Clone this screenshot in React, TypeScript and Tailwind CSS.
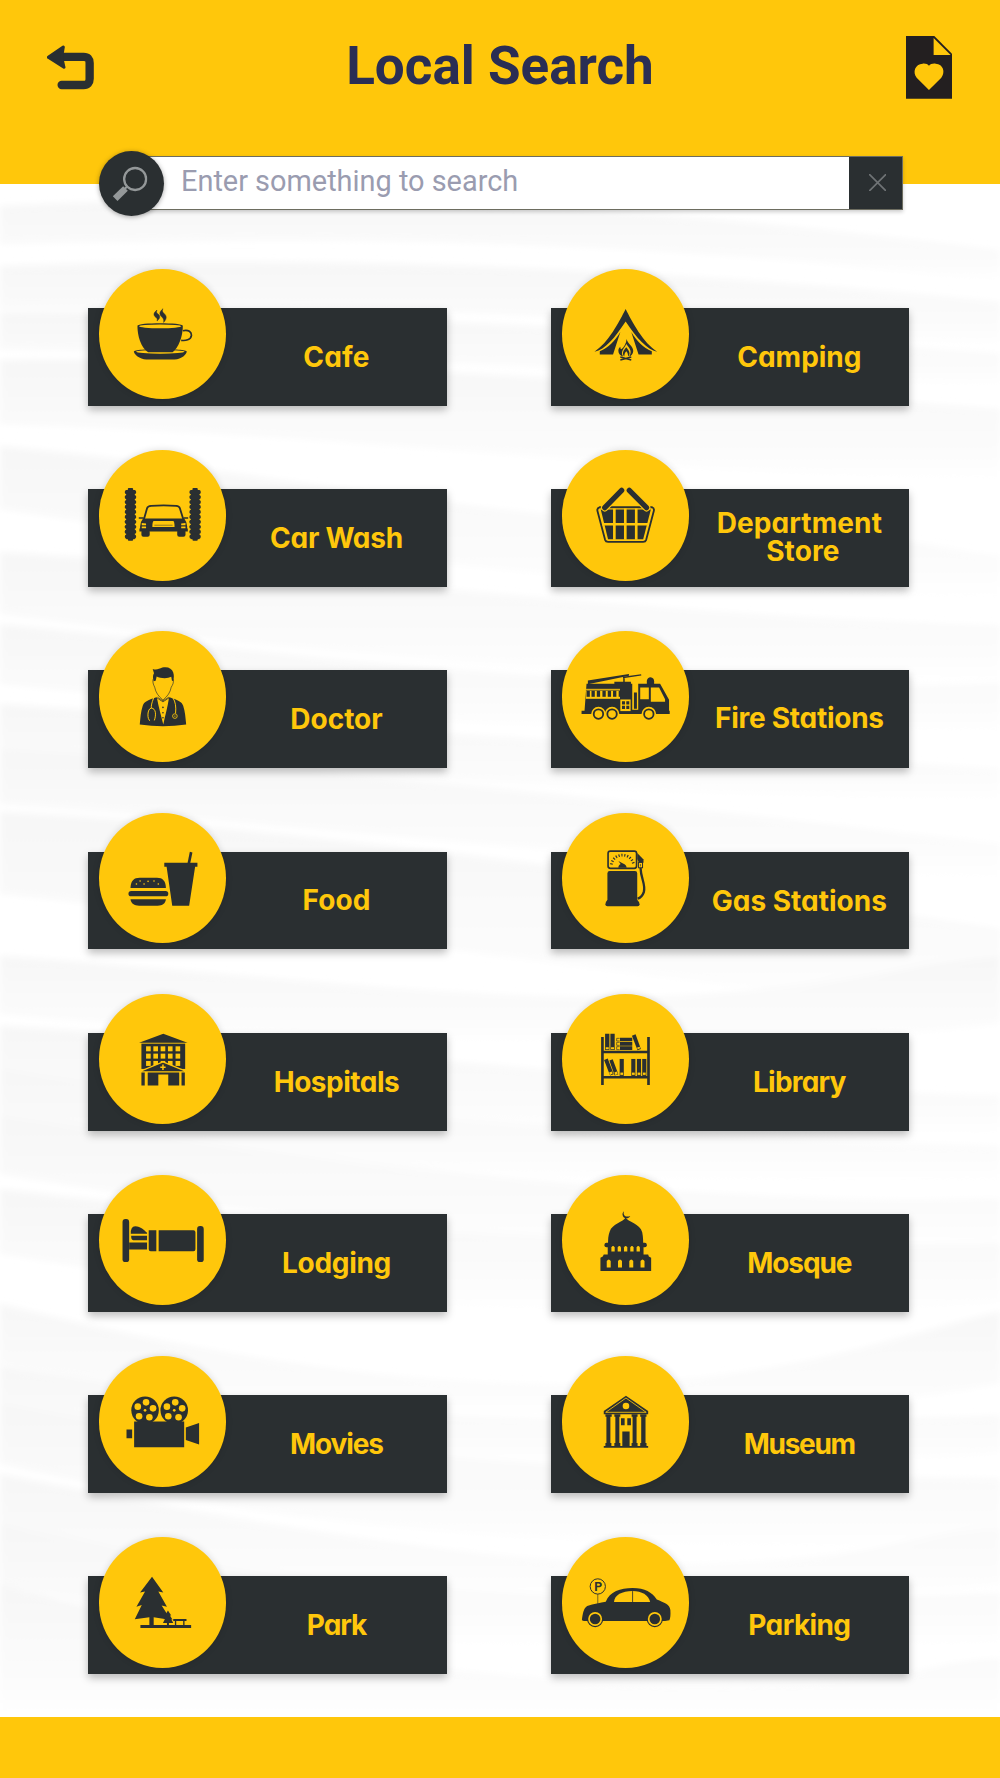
import React from "react";

const D = "#2a2f31";
const Y = "#ffc70b";

type IconProps = { box: string; children: React.ReactNode };

function Glyph({ box, children }: IconProps) {
  return (
    <svg viewBox={box} preserveAspectRatio="none" className="block h-full w-full" fill={D}>
      {children}
    </svg>
  );
}

const brushLobes = [0, 1, 2, 3, 4, 5, 6, 7, 8, 9];

function Brush({ x }: { x: number }) {
  return (
    <g>
      <rect x={x + 4} y={690} width={26} height={148} />
      <rect x={x + 9} y={684} width={16} height={159} rx={3} />
      {brushLobes.map((i) => (
        <rect key={i} x={x} y={690 + i * 14.9} width={34} height={12.6} rx={5} />
      ))}
    </g>
  );
}

function Cafe() {
  return (
    <Glyph box="55 26.4 385 392">
      <path d="M230 150C217 160 220 167 227 172C232 176 231 179 230 183C242 173 239 166 233 162C227 158 228 154 230 150Z" stroke={D} strokeWidth={1.5} />
      <path d="M248 146C233 158 239 166 246 172C251 177 251 182 250 187C262 174 258 167 252 161C245 155 245 151 248 146Z" stroke={D} strokeWidth={1.5} />
      <path d="M308 212C326 208 334 216 334 226C332 240 316 243 303 241" fill="none" stroke={D} strokeWidth={5} />
      <path d="M160 275C160 264 320 264 320 275C315 290 297 299 275 299H205C185 299 165 290 160 275Z" />
      <ellipse cx={240} cy={275.5} rx={73} ry={5.5} fill={Y} />
      <path d="M171 197C171 187 308 187 308 197C308 230 295 262 277 277H203C182 262 171 230 171 197Z" />
      <ellipse cx={239.5} cy={199} rx={64} ry={5.5} fill={Y} />
    </Glyph>
  );
}

function Camping() {
  return (
    <Glyph box="64 26.4 385 392">
      <path d="M256 147C275 185 310 250 351 275C320 268 290 235 256 184C222 235 195 268 162 275C203 250 237 185 256 147Z" />
      <path d="M240 216L218 284H178V274C205 262 222 245 240 216Z" />
      <path d="M273 216L295 284H335V274C308 262 291 245 273 216Z" />
      <path d="M259 237C262 252 279 258 279 273C279 282 272 288 266 290C277 276 269 266 258 252C252 266 238 276 249 290C240 287 234 281 234 272C234 267 237 262 240 260C240 264 241 267 243 268C251 262 258 250 259 237Z" />
      <path d="M258 262C268 274 271 282 264 290C263 283 262 278 258 274C253 279 252 284 252 290C244 281 249 272 258 262Z" />
      <path d="M240 300L273 291M240 291L273 300" stroke={D} strokeWidth={4.5} />
    </Glyph>
  );
}

function CarWash() {
  return (
    <Glyph box="55 569.7 385 392">
      <Brush x={133} />
      <Brush x={328} />
      <path d="M190 780L200 745Q202 739 212 738Q250 735 288 738Q297 739 299 745L310 780" fill="none" stroke={D} strokeWidth={5.5} />
      <path d="M188 776H312Q320 785 321 800V806H323V815H177V806H179V800Q180 785 188 776Z" />
      <path d="M175 774H190M310 774H324" stroke={D} strokeWidth={4.5} />
      <rect x={183} y={810} width={25} height={21} rx={6} />
      <rect x={291} y={810} width={25} height={21} rx={6} />
      <path d="M220 783H279Q283 785 283 801H216Q216 785 220 783Z" fill={Y} />
      <path d="M222 796H277" stroke={D} strokeWidth={1.5} />
      <path d="M184 789L197 791V796H184ZM184 800H197V805H184ZM316 789L303 791V796H316ZM316 800H303V805H316Z" fill={Y} />
    </Glyph>
  );
}

function Basket() {
  return (
    <Glyph box="64 569.7 385 392">
      <path d="M177 742H336Q343 745 341 753L318 840Q316 846 309 846H203Q196 846 194 840L171 753Q169 745 177 742Z" fill="none" stroke={D} strokeWidth={5.5} />
      <path d="M181 749H332L309 838H203Z" />
      <path d="M222 746V840M255 746V840M288 746V840M186 793H326" stroke={Y} strokeWidth={8} />
      <path d="M193 743L244 691M319 743L267 691" stroke={Y} strokeWidth={23} strokeLinecap="round" />
      <path d="M193 743L244 691M319 743L267 691" stroke={D} strokeWidth={16} strokeLinecap="round" />
    </Glyph>
  );
}

function Doctor() {
  return (
    <Glyph box="55 33 385 392">
      <path d="M217 147C228 151 236 147 246 143C262 139 275 145 279 158C282 167 281 175 279 184L275 182L273 171C262 177 240 176 229 170L226 183L220 184C216 170 219 163 221 160Z" />
      <path d="M218 178C216 190 221 197 223 202C226 218 234 229 248 241C262 229 270 218 273 202C277 195 281 190 279 178" fill="none" stroke={D} strokeWidth={2} />
      <path d="M228 232C205 240 190 245 187 258C181 275 180 295 178 314Q248 325 318 314C316 295 315 275 309 258C306 245 290 240 268 232L248 245Z" />
      <path d="M230 235L248 247L266 235C262 262 254 290 249 314C243 290 235 262 230 235Z" fill={Y} />
      <path d="M231 232L248 243L266 232" fill="none" stroke={D} strokeWidth={2} />
      <circle cx={248} cy={263} r={2.5} />
      <circle cx={248} cy={279} r={2.5} />
      <circle cx={248} cy={294} r={2.5} />
      <path d="M220 234C214 250 212 258 213 265M209 303C200 300 200 266 213 265C227 266 228 285 222 302M278 234C286 246 288 262 286 281" fill="none" stroke={Y} strokeWidth={3} />
      <circle cx={284} cy={289} r={7} fill="none" stroke={Y} strokeWidth={2.5} />
      <circle cx={284} cy={289} r={2} fill={Y} />
    </Glyph>
  );
}

const truckWindows = [138, 153, 169, 186, 202, 218, 235];
const truckWheels = [174, 215, 326];

function FireTruck() {
  return (
    <Glyph box="64 33 385 392">
      <path d="M138 192H222V186H272V192H360L387 240V273H389V283H123V273H132Z" />
      <rect x={276} y={184} width={18} height={86} fill={Y} />
      <rect x={281} y={218} width={9} height={49} />
      <path d="M300 203H326V238H300ZM332 203H357L375 238V246H332Z" fill={Y} />
      <rect x={136} y={207} width={103} height={30} fill={Y} />
      {truckWindows.map((x) => (
        <rect key={x} x={x} y={213} width={x === 235 ? 5 : 10} height={18} />
      ))}
      <rect x={136} y={210} width={103} height={2} />
      <rect x={240} y={239} width={31} height={35} fill={Y} />
      <path d="M245 244H254V254H245ZM258 244H267V254H258ZM245 258H254V268H245ZM258 258H267V268H258Z" />
      {truckWheels.map((x) => (
        <g key={x}>
          <circle cx={x} cy={283} r={22} fill={Y} />
          <circle cx={x} cy={283} r={17} />
          <circle cx={x} cy={283} r={11.5} fill={Y} />
        </g>
      ))}
      <path d="M320 193V183Q322 172 331 172Q342 174 342 184V193Z" />
      <path d="M142 182L266 162V168L142 193Z" />
      <path d="M248 173L303 165M251 170V188" stroke={D} strokeWidth={4.5} />
    </Glyph>
  );
}

function Food() {
  return (
    <Glyph box="55 576.3 385 392">
      <path d="M150 802C151 780 160 771 178 771H230C247 771 256 780 257 802Z" />
      <rect x={144} y={811} width={120} height={16} rx={8} />
      <path d="M150 836H257C255 849 247 855 232 855H176C161 855 152 849 150 836Z" />
      <g fill={Y}>
        <circle cx={179} cy={781} r={2.5} />
        <circle cx={203} cy={782} r={2.5} />
        <circle cx={221} cy={781} r={2.5} />
        <circle cx={168} cy={790} r={2.5} />
        <circle cx={191} cy={790} r={2.5} />
        <circle cx={234} cy={790} r={2.5} />
      </g>
      <path d="M252 726H352V738H345L327 855H276L259 738H252Z" />
      <path d="M326 728L333 694" stroke={D} strokeWidth={8} />
    </Glyph>
  );
}

function GasPump() {
  return (
    <Glyph box="64 576.3 385 392">
      <rect x={203} y={691} width={86} height={52} rx={7} fill="none" stroke={D} strokeWidth={5} />
      <path d="M213 731A34 34 0 0 1 280 731" fill="none" stroke={D} strokeWidth={8} strokeDasharray="3.4 5.4" />
      <path d="M234 741C234 735 238 731 241 730L234 721L248 728C255 730 259 735 259 741Z" />
      <rect x={201} y={751} width={90} height={96} rx={7} />
      <path d="M201 838H291Q298 843 298 851Q298 857 292 857H201Q195 857 195 851Q195 843 201 838Z" />
      <path d="M291 697L310 716V726H296L291 715Z" />
      <rect x={295} y={725} width={12} height={16} fill={Y} stroke={D} strokeWidth={3} />
      <path d="M301 730V737" stroke={D} strokeWidth={2} />
      <path d="M301 742C302 775 317 790 311 814C306 828 300 832 292 834" fill="none" stroke={D} strokeWidth={7} />
    </Glyph>
  );
}

const hospitalCols = [197, 219, 241, 263, 286];
const hospitalRows = [182, 204, 226];

function Hospital() {
  return (
    <Glyph box="55 24.6 385 392">
      <path d="M249 144L322 171H176Z" />
      <rect x={183} y={174} width={132} height={76} />
      {hospitalRows.map((y) =>
        hospitalCols.map((x) => <rect key={`${x}-${y}`} x={x} y={y} width={14} height={15} fill={Y} />),
      )}
      <path d="M248 229L322 259H175Z" stroke={Y} strokeWidth={4} />
      <path d="M248 237V253M240 245H256" stroke={Y} strokeWidth={4.5} />
      <path d="M183 261H193V300H183ZM202 261H297V300H264V267H234V300H202ZM304 261H314V300H304Z" />
    </Glyph>
  );
}

const lowBooks = [238, 273, 290, 306];

function Library() {
  return (
    <Glyph box="64 24.6 385 392">
      <path d="M182 154H190V298H182ZM321 154H329V298H321ZM188 195H323V203H188ZM188 271H323V279H188Z" />
      <path d="M194 144H207V193H194ZM210 144H223V193H210Z" />
      <path d="M196 185H205V191H196ZM212 185H221V191H212Z" fill={Y} />
      <path d="M239 156H276V167H239ZM239 169H276V180H239ZM239 182H276V193H239Z" />
      <path d="M238 158H229V166H238M238 170H229V179H238M238 183H229V192H238" fill="none" stroke={D} strokeWidth={2} />
      <path d="M275 150L286 146L302 190L292 194Z" />
      <path d="M290 186L298 183L300 188L293 191Z" fill={Y} />
      <path d="M191 223L202 219L220 266L209 270ZM207 225L217 221L234 266L223 270Z" />
      <path d="M206 261L215 258L217 264L209 268ZM222 261L230 258L232 265L225 268Z" fill={Y} />
      {lowBooks.map((x) => (
        <g key={x}>
          <rect x={x} y={220} width={12.5} height={51} />
          <rect x={x + 2} y={261} width={8.5} height={7} fill={Y} />
        </g>
      ))}
    </Glyph>
  );
}

function Bed() {
  return (
    <Glyph box="55 567.9 385 392">
      <rect x={126} y={700} width={20} height={130} rx={9} />
      <rect x={351} y={721} width={20} height={109} rx={9} />
      <path d="M151 745Q150 722 164 722C182 724 190 732 200 742V745Z" />
      <path d="M152 751H200V764H158Q152 764 152 751ZM146 771H200V792H146Z" />
      <path d="M205 734H228V797H211Q205 797 205 791ZM235 734H340Q346 734 346 740V791Q346 797 340 797H235Z" />
    </Glyph>
  );
}

const drumArches = [213, 232, 251, 270, 289];
const baseArches = [199, 233, 267, 301];

function Mosque() {
  return (
    <Glyph box="64 567.9 385 392">
      <path d="M251 677C247 690 256 696 270 691C266 700 252 701 248 692C245 686 247 680 251 677Z" />
      <path d="M256 696C262 709 300 715 306 740C309 755 309 765 309 774H203C203 765 203 750 208 738C215 715 250 709 256 696Z" />
      <rect x={192} y={772} width={128} height={13} rx={6} />
      <rect x={202} y={780} width={108} height={30} />
      {drumArches.map((x) => (
        <path key={x} d={`M${x} 798V786Q${x + 5} 777 ${x + 10} 786V798Z`} fill={Y} />
      ))}
      <path d="M190 807H324L326 813L333 817V857H180V817L187 813Z" />
      {baseArches.map((x) => (
        <path key={x} d={`M${x} 846V827Q${x + 6} 817 ${x + 12} 827V846Z`} fill={Y} />
      ))}
    </Glyph>
  );
}

const reelHoles = [
  [3, -24],
  [24, -6],
  [13, 21],
  [-18, 18],
  [-22, -11],
];
const reels = [194, 282];

function Movies() {
  return (
    <Glyph box="55 31.6 385 392">
      {reels.map((cx) => (
        <g key={cx}>
          <circle cx={cx} cy={195} r={41.5} />
          {reelHoles.map(([dx, dy]) => (
            <circle key={dx} cx={cx + dx} cy={195 + dy} r={10} fill={Y} />
          ))}
          <circle cx={cx} cy={195} r={4} fill={Y} />
        </g>
      ))}
      <path d="M161 229H312V306H161ZM138 253H155V279H138ZM317 247L357 233V298L317 284Z" />
    </Glyph>
  );
}

function Museum() {
  return (
    <Glyph box="64 31.6 385 392">
      <path d="M257 151L324 197V207H190V197Z" />
      <path d="M257 158L318 201H196Z" fill="none" stroke={Y} strokeWidth={2.5} />
      <circle cx={257} cy={182} r={10} fill={Y} />
      <path d="M195 207H214V214H210V293H213V303H195V293H198V214H195ZM222 207H240V214H237V293H240V303H222V293H225V214H222ZM274 207H292V214H289V293H292V303H274V293H277V214H274ZM300 207H319V214H316V293H319V303H300V293H303V214H300Z" />
      <path d="M190 302H324V308H190ZM242 219H253V240H242ZM261 219H272V240H261ZM246 259H268V303H246Z" />
    </Glyph>
  );
}

function Park() {
  return (
    <Glyph box="55 575.2 385 392">
      <path d="M215 695L249 742L234 739L260 785L244 781L272 825L220 817V841H207V817L163 823L184 780L168 785L194 739L179 742Z" />
      <path d="M263 796L273 811L269 811L277 824L273 823L279 834L248 834L254 822L250 823L258 810L254 811Z" />
      <path d="M180 840H333V849H180ZM260 833H266V841H260ZM279 822H319V828H279ZM284 828H288V840H284ZM309 828H313V840H309Z" />
    </Glyph>
  );
}

const carWheels = [164, 344];

function Parking() {
  return (
    <Glyph box="64 575.2 385 392">
      <circle cx={172} cy={724} r={23} fill="none" stroke={D} strokeWidth={3} />
      <path d="M172 747V778" stroke={D} strokeWidth={2} />
      <text x={173} y={737} textAnchor="middle" fontSize={37} fontWeight={700} fontFamily="Roboto, sans-serif">
        P
      </text>
      <path d="M124 826C126 805 130 789 140 783C160 776 180 773 196 770C208 740 240 729 277 729C315 729 335 742 350 763C372 772 390 778 391 795C392 810 391 820 388 826L375 828H130Z" />
      <path d="M221 771C222 750 245 738 277 738C305 738 325 750 330 771Z" fill={Y} />
      <path d="M277 738V772" stroke={D} strokeWidth={2.5} />
      {carWheels.map((x) => (
        <g key={x}>
          <circle cx={x} cy={822} r={24.5} />
          <circle cx={x} cy={822} r={21} fill={Y} />
          <circle cx={x} cy={822} r={16} />
        </g>
      ))}
    </Glyph>
  );
}

const categories = [
  { name: "Cafe", Icon: Cafe, tracking: "tracking-[0.2px]" },
  { name: "Camping", Icon: Camping, tracking: "tracking-normal" },
  { name: "Car Wash", Icon: CarWash, tracking: "tracking-[-0.25px]" },
  {
    name: (
      <>
        Department
        <span className="block pl-[7px]">Store</span>
      </>
    ),
    Icon: Basket,
    tracking: "tracking-[0.1px] pb-[2px]",
  },
  { name: "Doctor", Icon: Doctor, tracking: "tracking-normal" },
  { name: "Fire Stations", Icon: FireTruck, tracking: "tracking-[-0.26px] pb-[2px]" },
  { name: "Food", Icon: Food, tracking: "tracking-[0.1px] pb-px" },
  { name: "Gas Stations", Icon: GasPump, tracking: "tracking-normal" },
  { name: "Hospitals", Icon: Hospital, tracking: "tracking-[-0.5px]" },
  { name: "Library", Icon: Library, tracking: "tracking-[-0.8px]" },
  { name: "Lodging", Icon: Bed, tracking: "tracking-[-0.3px]" },
  { name: "Mosque", Icon: Mosque, tracking: "tracking-[-1.1px]" },
  { name: "Movies", Icon: Movies, tracking: "tracking-[-1.1px]" },
  { name: "Museum", Icon: Museum, tracking: "tracking-[-1.3px]" },
  { name: "Park", Icon: Park, tracking: "tracking-[-1.1px]" },
  { name: "Parking", Icon: Parking, tracking: "tracking-[-0.6px]" },
];

type Category = (typeof categories)[number];

function CategoryCard({ name, Icon, tracking }: Category) {
  return (
    <button className="relative block h-[137px] pt-[39.3px]">
      <span className="flex h-[97.7px] items-center justify-center bg-[#2a2f31] pl-[138px] text-center font-[Inter,sans-serif] text-[28px] leading-[28px] font-bold text-[#ffc70b] shadow-[0_4px_8px_rgba(0,0,0,0.26)] [font-feature-settings:'cv11']">
        <span className={tracking}>{name}</span>
      </span>
      <span className="absolute top-[0.3px] left-[10.4px] block h-[130.3px] w-[127.6px] rounded-[50%] bg-[#ffc70b] shadow-[0_0_7px_rgba(0,0,0,0.14)]">
        <Icon />
      </span>
    </button>
  );
}

const ripples = [
  "M0 22C180 12 400 14 560 24S850 48 1000 66V100C700 60 400 50 0 60Z",
  "M0 82C250 72 600 78 1000 118V165C650 130 350 120 0 125Z",
  "M0 128C300 125 600 145 1000 170V205C650 190 350 170 0 165Z",
  "M0 176C250 172 600 196 1000 225V300C650 290 350 250 0 240Z",
  "M0 262C250 285 500 335 720 345S920 362 1000 372V420C700 410 300 370 0 325Z",
  "M0 368C300 385 600 430 1000 442V500C650 500 300 470 0 430Z",
  "M0 440C250 465 600 515 1000 500V550C650 560 300 530 0 500Z",
  "M0 520C300 540 600 560 1000 585V620C650 610 300 590 0 565Z",
  "M0 565C300 580 600 615 1000 660V700C650 680 300 640 0 620Z",
  "M0 628C250 640 600 685 1000 745V830C650 800 300 740 0 710Z",
  "M0 772C250 790 500 822 680 812S900 780 1000 772V840C700 880 300 860 0 830Z",
  "M0 842C250 855 600 900 1000 912V955C650 960 300 920 0 890Z",
  "M0 885C250 920 600 955 1000 962V1000C650 1010 300 980 0 940Z",
  "M0 932C250 965 500 1000 720 1010S920 1015 1000 1015V1070C700 1080 300 1040 0 990Z",
  "M0 1005C250 1035 600 1070 1000 1060V1120C650 1150 300 1120 0 1070Z",
  "M0 1120C200 1170 400 1205 600 1200S900 1150 1000 1128V1200C700 1260 300 1240 0 1180Z",
  "M0 1182C250 1225 500 1250 1000 1232V1270C650 1300 300 1280 0 1225Z",
  "M0 1220C250 1260 500 1290 1000 1295V1370C650 1370 300 1350 0 1280Z",
  "M0 1290C250 1340 500 1385 700 1380S900 1350 1000 1345V1400C700 1440 300 1420 0 1350Z",
  "M0 1340C250 1395 500 1430 1000 1410V1460C650 1480 300 1470 0 1400Z",
  "M0 1400C200 1455 450 1500 700 1500S900 1480 1000 1475V1534H0Z",
];

function Waves() {
  return (
    <svg viewBox="0 0 1000 1534" preserveAspectRatio="none" className="absolute inset-0 h-full w-full" aria-hidden="true">
      <defs>
        <linearGradient id="fade" x1="0" y1="0" x2="0" y2="1">
          <stop offset="0" stopColor="#f7f7f7" />
          <stop offset="0.55" stopColor="#fafafa" />
          <stop offset="1" stopColor="#ffffff" />
        </linearGradient>
        <filter id="soft">
          <feGaussianBlur stdDeviation="3" />
        </filter>
      </defs>
      <g fill="url(#fade)" filter="url(#soft)">
        {ripples.map((d) => (
          <path key={d} d={d} />
        ))}
      </g>
    </svg>
  );
}

export default function App() {
  return (
    <div className="flex h-[1778px] w-[1000px] flex-col overflow-hidden bg-white">
      <header className="relative z-10 h-[183.5px] shrink-0 bg-[#ffc70b]">
        <div className="flex h-[135px] items-center justify-between pr-[47.5px] pl-[46.5px]">
          <svg viewBox="140 136 142 134" className="h-[44.7px] w-[47.3px]" aria-label="Back">
            <path d="M185 171.500H250Q268 171.500 268 190V237Q268 256 250 256H184" fill="none" stroke={D} strokeWidth={25} strokeLinecap="round" />
            <path d="M144 173L189 142L184 172L191 203Z" fill={D} stroke={D} strokeWidth={9} strokeLinejoin="round" />
          </svg>
          <h1 className="pb-[2px] font-[Roboto,sans-serif] text-[53px] leading-none font-bold text-[#2a2e54]">Local Search</h1>
          <svg viewBox="1219 108 139 188" className="h-[62.7px] w-[46.3px]" aria-label="Favorites">
            <path d="M1219 108H1304L1358 162V296H1219Z" fill="#231f20" />
            <path d="M1302 114L1353 165H1302Z" fill={Y} />
            <path d="M1288 270L1251 233C1238 217 1246 192 1269 191C1278 190 1284 193 1288 197C1292 193 1298 190 1308 191C1331 192 1338 217 1325 233Z" fill={Y} />
          </svg>
        </div>
        <div className="ml-[99px] flex h-[97px] w-[804px] items-center">
          <div className="z-10 grid h-[65px] w-[65px] shrink-0 place-items-center rounded-full bg-[#2a2f31] shadow-[0_1px_5px_rgba(0,0,0,0.35)]">
            <svg viewBox="338 496 106 106" className="h-[35.3px] w-[35.3px] -translate-x-[1.5px]" aria-label="Search">
              <circle cx={406} cy={535} r={33} fill="none" stroke="#949899" strokeWidth={7} />
              <path d="M370 557L384 570L353 601L339 587Z" fill="#949899" />
              <path d="M375 564L384 557" stroke="#949899" strokeWidth={6} />
            </svg>
          </div>
          <div className="mb-[2px] -ml-[30px] flex h-[54px] flex-1 border border-[#6d6d60] bg-white shadow-[0_2px_4px_rgba(0,0,0,0.2)]">
            <input
              placeholder="Enter something to search"
              className="min-w-0 flex-1 pb-[2px] pl-[46px] font-[Roboto,sans-serif] text-[28.9px] outline-none placeholder:text-[#9a9cb0]"
            />
            <button className="grid w-[53px] place-items-center bg-[#2a2f31]" aria-label="Clear">
              <svg viewBox="1108 521 52 52" className="h-[17.3px] w-[17.3px] translate-x-[2px]">
                <path d="M1110 523L1158 571M1158 523L1110 571" stroke="#6f7375" strokeWidth={5} strokeLinecap="round" />
              </svg>
            </button>
          </div>
        </div>
      </header>
      <main className="relative flex-1">
        <Waves />
        <div className="relative mt-[85.3px] ml-[88.4px] grid grid-cols-[358.2px_358.2px] gap-x-[104.7px] gap-y-[44.2px]">
          {categories.map((c, i) => (
            <CategoryCard key={i} {...c} />
          ))}
        </div>
      </main>
      <footer className="relative h-[61px] shrink-0 bg-[#ffc70b]" />
    </div>
  );
}
